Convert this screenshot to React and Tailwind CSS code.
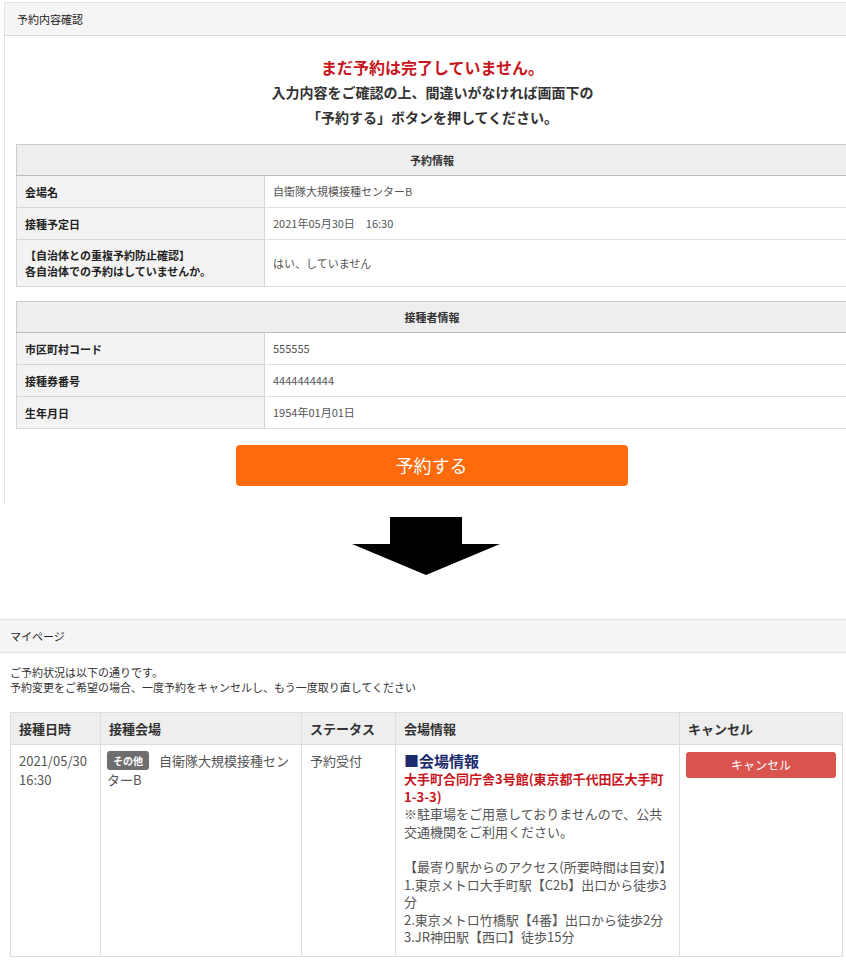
const FONT = { fontFamily: "'Noto Sans CJK JP', 'Noto Sans', sans-serif" };

function InfoTable({ title, rows }) {
  return (
    <table className="w-[832px] border-collapse table-fixed text-[11px]">
      <colgroup>
        <col className="w-[248px]" />
        <col />
      </colgroup>
      <thead>
        <tr>
          <th colSpan={2} className="h-[31px] bg-[#eeeeee] border border-[#cccccc] border-b-[#bbbbbb] font-bold text-[#333] text-center">
            {title}
          </th>
        </tr>
      </thead>
      <tbody>
        {rows.map((r) => (
          <tr key={r.title || r.label}>
            <td className={`bg-[#f3f3f3] border border-[#d6d6d6] px-2 font-bold text-[#222] leading-[16px] ${r.tall ? 'h-[47px]' : 'h-[32px]'}`}>
              {r.label}
            </td>
            <td className="bg-white border border-[#e0e0e0] px-2 text-[#555]">{r.value}</td>
          </tr>
        ))}
      </tbody>
    </table>
  );
}

export default function App() {
  return (
    <div className="w-[846px] min-h-[964px] bg-white overflow-hidden" style={FONT}>
      {/* confirm card */}
      <div className="pt-[2px]">
        <div className="ml-[4px] w-[856px] border-l border-t border-[#e3e3e3] bg-white">
          <div className="h-[33px] bg-[#f5f5f5] border-b border-[#d9d9d9] flex items-center pl-[12px] text-[11px] text-[#222]">
            予約内容確認
          </div>
          <div className="pt-[19px] text-center">
            <div className="text-[16px] leading-[25px] font-bold text-[#c8161d]">まだ予約は完了していません。</div>
            <div className="text-[14px] leading-[25px] font-bold text-[#333]">入力内容をご確認の上、間違いがなければ画面下の</div>
            <div className="text-[14px] leading-[25px] font-bold text-[#333]">「予約する」ボタンを押してください。</div>
          </div>
          <div className="mt-[14px] ml-[11px]">
            <InfoTable
              title="予約情報"
              rows={[
                { title: 'a', label: '会場名', value: '自衛隊大規模接種センターB' },
                { title: 'b', label: '接種予定日', value: '2021年05月30日　16:30' },
                {
                  title: 'c',
                  label: (
                    <>
                      【自治体との重複予約防止確認】
                      <br />
                      各自治体での予約はしていませんか。
                    </>
                  ),
                  value: 'はい、していません',
                  tall: true,
                },
              ]}
            />
          </div>
          <div className="mt-[14px] ml-[11px]">
            <InfoTable
              title="接種者情報"
              rows={[
                { title: 'd', label: '市区町村コード', value: '555555' },
                { title: 'e', label: '接種券番号', value: '4444444444' },
                { title: 'f', label: '生年月日', value: '1954年01月01日' },
              ]}
            />
          </div>
          <div className="pt-[16px] pb-[19px] flex justify-center">
            <button className="w-[392px] h-[41px] rounded-[4px] bg-[#ff6a0c] text-white text-[18px] -ml-[2px]">
              予約する
            </button>
          </div>
        </div>
      </div>

      {/* arrow */}
      <div className="mt-[12px] flex justify-center pl-[6px]">
        <svg width="148" height="58" viewBox="0 0 148 58">
          <polygon points="38,0 110,0 110,27 148,27 74,58 0,27 38,27" fill="#000" />
        </svg>
      </div>

      {/* my page */}
      <div className="mt-[44px] h-[34px] bg-[#f5f5f5] border-t border-b border-[#e2e2e2] flex items-center pl-[10px] text-[11px] text-[#222]">
        マイページ
      </div>
      <div className="pl-[10px] pt-[12px] text-[11px] leading-[15px] text-[#333]">
        <div>ご予約状況は以下の通りです。</div>
        <div>予約変更をご希望の場合、一度予約をキャンセルし、もう一度取り直してください</div>
      </div>
      <table className="mt-[17px] ml-[10px] w-[832px] border-collapse table-fixed text-[13px] text-[#555]">
        <thead>
          <tr className="h-[32px] bg-[#eeeeee] text-[#333] text-left text-[13px] font-bold">
            <th className="w-[90px] border border-[#dddddd] px-2 font-bold">接種日時</th>
            <th className="w-[201px] border border-[#dddddd] px-2 font-bold">接種会場</th>
            <th className="w-[94px] border border-[#dddddd] px-2 font-bold">ステータス</th>
            <th className="w-[284px] border border-[#dddddd] px-2 font-bold">会場情報</th>
            <th className="w-[163px] border border-[#dddddd] px-2 font-bold">キャンセル</th>
          </tr>
        </thead>
        <tbody>
          <tr className="h-[212px] align-top">
            <td className="border border-[#dddddd] px-2 pt-[6px] leading-[19px]">
              2021/05/30
              <br />
              16:30
            </td>
            <td className="border border-[#dddddd] px-[6px] pt-[6px] leading-[19px]">
              <span className="inline-block h-[19px] leading-[19px] px-[6px] mr-[10px] rounded-[3px] bg-[#6e6e6e] text-white text-[10px] font-bold align-top">
                その他
              </span>
              <span>自衛隊大規模接種センターB</span>
            </td>
            <td className="border border-[#dddddd] px-2 pt-[6px] leading-[19px]">予約受付</td>
            <td className="border border-[#dddddd] px-2 pt-[6px] leading-[17.6px]">
              <div className="text-[15px] leading-[19px] font-bold text-[#1c2a6e]">■会場情報</div>
              <div className="font-bold text-[#c8161d]">大手町合同庁舎3号館(東京都千代田区大手町</div>
              <div className="font-bold text-[#c8161d]">1-3-3)</div>
              <div className="whitespace-nowrap">※駐車場をご用意しておりませんので、公共</div>
              <div>交通機関をご利用ください。</div>
              <div className="h-[17.6px]" />
              <div className="whitespace-nowrap">【最寄り駅からのアクセス(所要時間は目安)】</div>
              <div className="whitespace-nowrap">1.東京メトロ大手町駅【C2b】出口から徒歩3</div>
              <div>分</div>
              <div className="whitespace-nowrap">2.東京メトロ竹橋駅【4番】出口から徒歩2分</div>
              <div>3.JR神田駅【西口】徒歩15分</div>
            </td>
            <td className="border border-[#dddddd] px-[6px] pt-[7px]">
              <button className="w-[150px] h-[26px] rounded-[3px] bg-[#d9534f] text-white text-[12px]">
                キャンセル
              </button>
            </td>
          </tr>
        </tbody>
      </table>
    </div>
  );
}
